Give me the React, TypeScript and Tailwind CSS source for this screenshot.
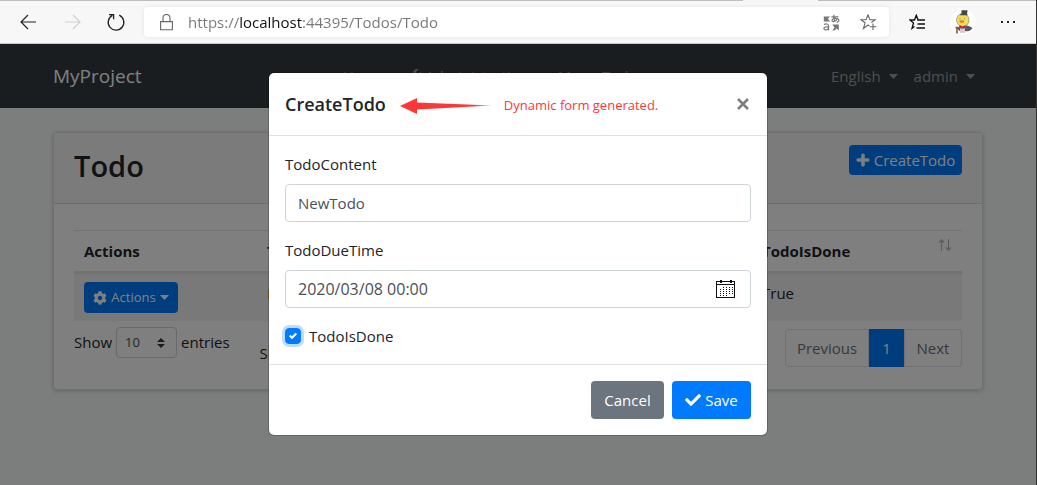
import React from "react";
import { FaCheck, FaCog, FaPlus, FaWrench } from "react-icons/fa";

function BrowserBar() {
  return (
    <header className="flex h-11 shrink-0 flex-col border-b border-[#c8c8c8] bg-[#f7f7f7]">
      <div className="flex h-px">
        <div className="w-[743px] bg-[#bdbdbd]" />
        <div className="w-[75px]" />
        <div className="flex-1 bg-[#bdbdbd]" />
      </div>
      <div className="flex flex-1 items-center pl-5 pr-5">
        <button aria-label="Back" className="text-[#222]">
          <svg width="17" height="16" viewBox="0 0 17 16" fill="none" stroke="currentColor" strokeWidth="1.2">
            <path d="M16 8H1M8 1L1 8l7 7" />
          </svg>
        </button>
        <button aria-label="Forward" disabled className="ml-7 text-[#cfcfcf]">
          <svg width="17" height="16" viewBox="0 0 17 16" fill="none" stroke="currentColor" strokeWidth="1.2">
            <path d="M0 8h15M8 1l7 7-7 7" />
          </svg>
        </button>
        <button aria-label="Refresh" className="ml-6 text-[#222]">
          <svg width="20" height="20" viewBox="0 0 20 20" fill="none" stroke="currentColor" strokeWidth="1.3">
            <path d="M13.2 3.2A7.8 7.8 0 1 1 6.4 3.4M3 2.7h4.6v4.6" />
          </svg>
        </button>
        <div className="ml-[18px] flex h-[30px] flex-1 items-center rounded bg-white pl-4 pr-3 shadow-[0_0_4px_rgba(0,0,0,0.08)]">
          <svg width="13" height="17" viewBox="0 0 13 17" fill="none" stroke="#666" strokeWidth="1.1" className="shrink-0">
            <path d="M.6 7.6h11.8v8.2H.6zM3 7.6V4a3.4 3.4 0 0 1 7 0v3.6" />
          </svg>
          <input
            aria-label="Address"
            defaultValue="https://localhost:44395/Todos/Todo"
            className="ml-[15px] min-w-0 flex-1 bg-[linear-gradient(90deg,#767676_0_51px,#111_51px_114px,#767676_114px)] bg-clip-text text-[15px] text-transparent caret-black outline-none"
          />
          <button aria-label="Translate" className="text-[#777]">
            <svg width="17" height="17" viewBox="0 0 17 17" fill="none" stroke="currentColor" strokeWidth="1.2">
              <path d="M8.4 2.900h7M11 .8c-.2 3 0 4.600.5 6.500M14.400 4c-.6 2.700-3.500 4.300-5 3.300-1.300-1.300 1-3.300 3.800-2.800 3.500.2 3.500 3.100.4 4" />
              <path d="M1 10.500c2-1.200 4.600-.7 4.600 1.400v4.300M5.600 12.700c-3.400 0-4.800.7-4.700 2 .2 1.900 3.800 1.600 4.700-.5" />
              <path d="M.8 2.400h6.400L4.800 4.800 7.200 7.600H.8zM9.400 10.400h6.400v6L13.600 14.400 11.400 16.400H9.400l2.200-3z" fill="currentColor" stroke="none" />
            </svg>
          </button>
          <button aria-label="Add to favorites" className="ml-5 text-[#666]">
            <svg width="17" height="17" viewBox="0 0 17 17" fill="none" stroke="currentColor" strokeWidth="1.1">
              <path d="M9.500 12.100 8 11 3.400 14.500l1.700-5.700L.9 5.700h5.200L8 .8l1.900 4.900h5.200l-3.700 2.800M13 9.500v6.500M9.800 12.700h6.400" />
            </svg>
          </button>
        </div>
        <button aria-label="Favorites" className="ml-5 text-[#111]">
          <svg width="17" height="17" viewBox="0 0 17 17" fill="none" stroke="currentColor" strokeWidth="1.3">
            <path d="M5.500 12.400 3 14.300l1.500-5.400L.9 6h4.600L7.300 1.200 9.100 6H15M8.200 6H16M8.500 10H16M7.500 14H16" />
          </svg>
        </button>
        <button aria-label="Profile" className="ml-6">
          <svg width="26" height="26" viewBox="0 0 26 26">
            <circle cx="13" cy="13" r="12.500" fill="#fff" />
            <path d="M7.500 20c1.200-3 3.500-4 6-4 4 0 7 1.500 9 3-1 2-3 3-5 3.200H10z" fill="#5c5661" />
            <ellipse cx="12.800" cy="11" rx="6.200" ry="6.600" fill="#f3df56" stroke="#9b9278" strokeWidth=".8" />
            <path d="M11.500 1.200h6l-.5 4.300h-5.500zM10 5.300h7.500v1H10z" fill="#4a444c" />
            <ellipse cx="11.800" cy="12.500" rx="2.400" ry="1.300" fill="#e37a2c" />
            <circle cx="10" cy="9.800" r=".5" fill="#555" />
            <circle cx="14.500" cy="9.800" r=".5" fill="#555" />
            <path d="m9.500 16 3 1.400 3-1.400v3.400l-3-1.200-3 1.200z" fill="#d8242f" />
            <path d="M10 19.500h5V24h-5z" fill="#d9c9d3" />
            <path d="M5.500 18.500h2.800M7 18.500v6" stroke="#8a4b2d" strokeWidth="1.500" />
          </svg>
        </button>
        <button aria-label="More" className="ml-6 text-[#222]">
          <svg width="16" height="4" viewBox="0 0 16 4" fill="currentColor">
            <path d="M1 1h2v2H1zM7 1h2v2H7zM13 1h2v2h-2z" />
          </svg>
        </button>
      </div>
    </header>
  );
}

function Caret() {
  return (
    <svg width="9" height="5" viewBox="0 0 9 5" fill="currentColor" aria-hidden="true">
      <path d="M0 0h9L4.500 5z" />
    </svg>
  );
}

function Navbar() {
  return (
    <nav className="bg-[#343a40]">
      <div className="mx-auto flex h-16 max-w-[930px] items-center justify-between pr-2">
        <a href="#" className="text-[19px] text-white">MyProject</a>
        <div className="flex gap-4 pl-2 text-white/50">
          <a href="#" className="w-12">Home</a>
          <a href="#" className="flex items-center gap-1">
            <FaWrench size={14} /> Administration <Caret />
          </a>
          <a href="#">Menu:Todo</a>
        </div>
        <div className="flex gap-4 text-white/50">
          <button className="flex items-center gap-2">English <Caret /></button>
          <button className="flex items-center gap-2">admin <Caret /></button>
        </div>
      </div>
    </nav>
  );
}

function TodoCard() {
  return (
    <section className="rounded border border-[#dfdfdf] bg-white shadow-[0_1px_4px_rgba(0,0,0,0.2)]">
      <div className="flex h-[71px] items-start justify-between border-b border-[#d8d8d8] bg-[#f7f7f7] px-5 pt-3">
        <h2 className="text-[29px] font-semibold leading-[42px]">Todo</h2>
        <button className="flex h-[30px] w-[113px] items-center justify-center gap-1 whitespace-nowrap rounded bg-[#007bff] text-[15px] text-white">
          <FaPlus size={14} stroke="currentColor" strokeWidth={30} /> CreateTodo
        </button>
      </div>
      <div className="px-5 pb-[22px] pt-[26px]">
        <table className="w-full table-fixed border-separate border-spacing-0 text-left">
          <thead>
            <tr className="[&>th]:border-b-2 [&>th]:border-t [&>th]:border-[#dee2e6] [&>th]:px-2.5 [&>th]:py-2 [&>th]:text-[15px] [&>th]:font-bold [&>th]:leading-6">
              <th className="w-[183px]">Actions</th>
              <th className="w-[248px]">TodoContent</th>
              <th className="w-[247px]">TodoDueTime</th>
              <th>
                <div className="flex justify-between">
                  TodoIsDone
                  <svg width="14" height="12" viewBox="0 0 14 12" fill="none" stroke="#bbb" strokeWidth="1.200" aria-hidden="true">
                    <path d="M3.500 12V1M1 3.500 3.500.8 6 3.500M10.500 0v11M8 8.500l2.500 2.700L13 8.500" />
                  </svg>
                </div>
              </th>
            </tr>
          </thead>
          <tbody>
            <tr className="bg-[#f2f2f2] align-top [&>td]:border-t [&>td]:border-[#dee2e6] [&>td]:px-2.5 [&>td]:py-2">
              <td>
                <button className="flex h-[31px] w-[94px] items-center justify-center gap-1 rounded bg-[#007bff] text-[13px] text-white">
                  <FaCog size={14} /> Actions <Caret />
                </button>
              </td>
              <td className="text-[#e08a20]">NewTodo</td>
              <td>2020/03/08</td>
              <td>True</td>
            </tr>
          </tbody>
        </table>
        <div className="flex items-start pt-1.5">
          <div className="flex items-center gap-1">
            <label htmlFor="page-size">Show</label>
            <div className="grid items-center">
              <select
                id="page-size"
                className="col-start-1 row-start-1 h-[31px] w-[61px] appearance-none rounded border border-[#ced4da] bg-white pl-2 text-[13px] text-[#495057]"
              >
                <option>10</option>
                <option>25</option>
              </select>
              <svg width="8" height="10" viewBox="0 0 8 10" className="pointer-events-none col-start-1 row-start-1 mr-3 justify-self-end" fill="#343a40">
                <path d="M0 4h8L4 0zM0 6h8L4 10z" />
              </svg>
            </div>
            <label htmlFor="page-size">entries</label>
          </div>
          <p className="ml-[30px] mt-[15px] whitespace-nowrap">Showing 1 to 1 of 1 entries</p>
          <div className="ml-auto mt-0.5 flex h-[38px] text-[#6c757d]">
            <button className="w-[84px] rounded-l border border-[#dee2e6]">Previous</button>
            <button className="w-[35px] bg-[#007bff] text-white">1</button>
            <button className="w-[58px] rounded-r border border-[#dee2e6]">Next</button>
          </div>
        </div>
      </div>
    </section>
  );
}

function CreateTodoModal() {
  return (
    <div className="absolute inset-0 flex items-start justify-center bg-black/50 pt-7">
      <form
        role="dialog"
        aria-labelledby="modal-title"
        onSubmit={(e) => e.preventDefault()}
        className="w-full max-w-[500px] rounded-md border border-black/20 bg-white bg-clip-padding text-[15px]"
      >
        <div className="flex items-center border-b border-[#dee2e6] px-4 py-4">
          <h5 id="modal-title" className="text-[18px] font-semibold leading-[30px]">CreateTodo</h5>
          <div className="ml-3.5 flex items-center gap-3 pt-1">
            <svg width="92" height="16" viewBox="0 0 92 16" className="shrink-0" aria-hidden="true">
              <defs>
                <linearGradient id="fade">
                  <stop offset=".8" stopColor="#fb3838" />
                  <stop offset="1" stopColor="#fb3838" stopOpacity=".4" />
                </linearGradient>
              </defs>
              <path d="M0 8 17 0v4.500L92 7.500 17 11.500V16z" fill="url(#fade)" />
            </svg>
            <p className="whitespace-nowrap text-[13px] text-[#fb3838]">Dynamic form generated.</p>
          </div>
          <button type="button" aria-label="Close" className="ml-auto mr-0.5">
            <svg width="12" height="12" viewBox="0 0 12 12" stroke="#7f7f7f" strokeWidth="2.600">
              <path d="m1 1 10 10M11 1 1 11" />
            </svg>
          </button>
        </div>
        <div className="flex flex-col gap-4 p-4">
          <div className="flex flex-col gap-2">
            <label htmlFor="content" className="leading-6">TodoContent</label>
            <input
              id="content"
              defaultValue="NewTodo"
              className="h-[38px] rounded border border-[#ced4da] px-3 text-[#495057] outline-none"
            />
          </div>
          <div className="flex flex-col gap-2">
            <label htmlFor="due" className="leading-6">TodoDueTime</label>
            <div className="flex h-[38px] items-center rounded border border-[#ced4da] px-3">
              <input
                id="due"
                defaultValue="2020/03/08 00:00"
                className="min-w-0 flex-1 text-base text-[#495057] outline-none"
              />
              <button type="button" aria-label="Pick a date" className="mr-[3px]">
                <svg width="19" height="18" viewBox="0 0 19 18" fill="none" stroke="#111" shapeRendering="crispEdges">
                  <path d="M.5 1.500h18v16H.5z" />
                  <path d="M1 4.500h17" />
                  <path d="M4.500 0v3M14.500 0v3" strokeWidth="2" />
                  <path d="M7 7.500h10M4 9.500h13M4 11.500h13M4 13.500h13M4 15.500h9" strokeDasharray="1 2" />
                </svg>
              </button>
            </div>
          </div>
          <div className="flex h-6 items-center gap-2">
            <div className="grid place-items-center">
              <input
                id="done"
                type="checkbox"
                defaultChecked
                className="peer col-start-1 row-start-1 size-4 appearance-none rounded border border-[#adb5bd] shadow-[0_0_0_3px_rgba(0,123,255,0.25)] checked:border-[#007bff] checked:bg-[#007bff]"
              />
              <svg width="8" height="8" viewBox="0 0 8 8" className="pointer-events-none col-start-1 row-start-1 hidden peer-checked:block" fill="#fff">
                <path d="M6.564.75l-3.590 3.612-1.538-1.550L0 4.260 2.974 7.250 8 2.193z" />
              </svg>
            </div>
            <label htmlFor="done">TodoIsDone</label>
          </div>
        </div>
        <div className="flex justify-end gap-2 border-t border-[#dee2e6] p-4">
          <button type="button" className="h-[38px] w-[73px] rounded bg-[#6c757d] text-white">Cancel</button>
          <button type="submit" className="flex h-[38px] w-[79px] items-center justify-center gap-1 rounded bg-[#007bff] text-white">
            <FaCheck size={16} /> Save
          </button>
        </div>
      </form>
    </div>
  );
}

export default function App() {
  return (
    <div className="flex min-h-screen flex-col overflow-x-hidden border-r border-[#333] font-['Open_Sans','Noto_Sans',sans-serif] text-[15px] text-[#212529]">
      <BrowserBar />
      <div className="relative flex flex-1 flex-col bg-[#f8fbfa]">
        <Navbar />
        <main className="mx-auto w-full max-w-[930px] pt-6">
          <TodoCard />
        </main>
        <CreateTodoModal />
      </div>
    </div>
  );
}
